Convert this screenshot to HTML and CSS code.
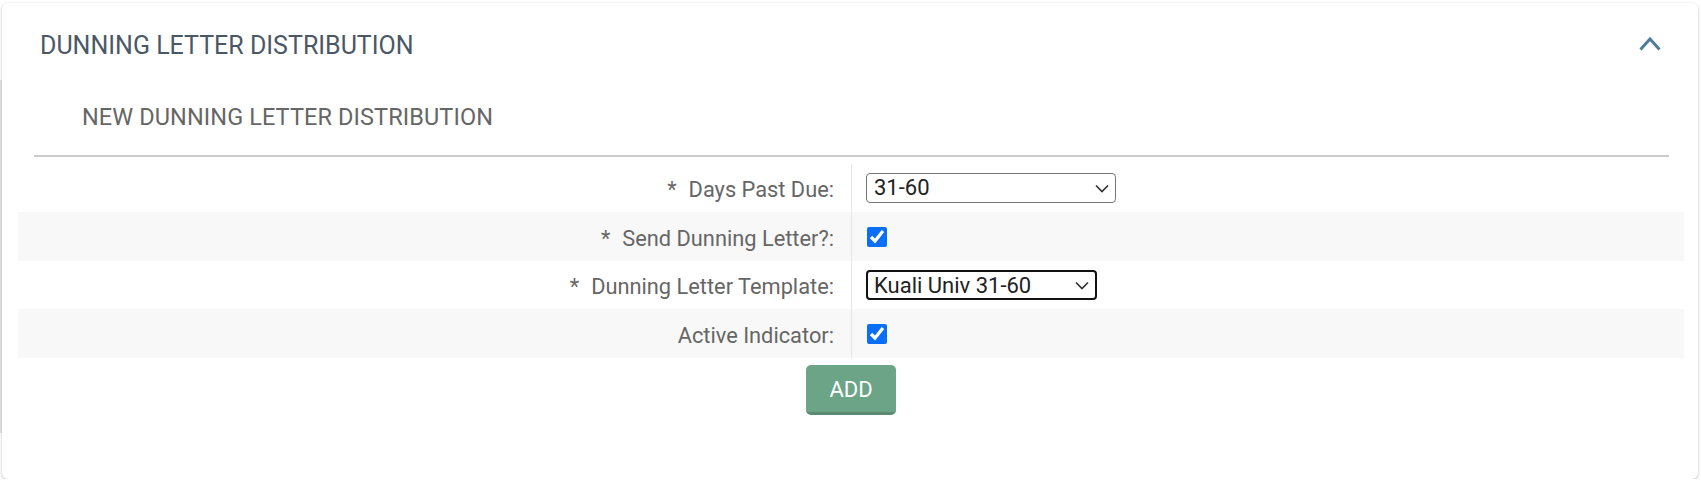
FILE: index.html
```html
<!DOCTYPE html>
<html lang="en">
<head>
<meta charset="utf-8">
<title>Dunning Letter Distribution</title>
<link rel="stylesheet" href="styles.css">
</head>
<body>
<div class="page">
  <div class="strip"></div>
  <section class="card">
    <header class="card-head">
      <h2 class="title">DUNNING LETTER DISTRIBUTION</h2>
      <svg class="chevron" width="22" height="15" viewBox="0 0 22 15" aria-hidden="true">
        <polyline points="1.5,13.5 11,3 20.5,13.5" fill="none" stroke="#4f7c98" stroke-width="3"/>
      </svg>
    </header>
    <h3 class="subtitle">NEW DUNNING LETTER DISTRIBUTION</h3>
    <div class="rule"></div>
    <div class="rows">
      <div class="row">
        <div class="label"><span class="req">*</span>Days Past Due:</div>
        <div class="field">
          <select class="sel sel-wide"><option>31-60</option></select>
        </div>
      </div>
      <div class="row">
        <div class="label"><span class="req">*</span>Send Dunning Letter?:</div>
        <div class="field"><input type="checkbox" class="chk" checked></div>
      </div>
      <div class="row">
        <div class="label"><span class="req">*</span>Dunning Letter Template:</div>
        <div class="field">
          <select class="sel sel-focus"><option>Kuali Univ 31-60</option></select>
        </div>
      </div>
      <div class="row">
        <div class="label">Active Indicator:</div>
        <div class="field"><input type="checkbox" class="chk" checked></div>
      </div>
    </div>
    <div class="actions">
      <button class="btn-add" type="button">ADD</button>
    </div>
  </section>
</div>
</body>
</html>
```
FILE: styles.css
```css
html, body {
  margin: 0;
  padding: 0;
  background: #ffffff;
  font-family: Roboto, "Liberation Sans", Arial, sans-serif;
}

.page {
  display: flex;
  align-items: flex-start;
  padding: 3px 3px 0 0;
}

.strip {
  flex: none;
  width: 2px;
  height: 353px;
  margin-top: 77px;
  background: #e4e8e7;
}

.card {
  flex: 1;
  height: 476px;
  box-sizing: border-box;
  background: #ffffff;
  border-radius: 6px;
  box-shadow: 0 1px 3px rgba(0, 0, 0, 0.28);
}

.card-head {
  display: flex;
  align-items: center;
  justify-content: space-between;
  padding: 28px 37px 0 38px;
}

.title {
  margin: 0;
  font-size: 25px;
  line-height: 30px;
  font-weight: 400;
  color: #4a5866;
  letter-spacing: 0;
}

.chevron {
  display: block;
  margin-top: -6px;
}

.subtitle {
  margin: 41px 0 0 80px;
  font-size: 23.5px;
  line-height: 30px;
  font-weight: 400;
  color: #666666;
  letter-spacing: 0.1px;
}

.rule {
  margin: 23px 29px 0 32px;
  height: 2px;
  background: #cccccc;
}

.rows {
  margin: 7px 14px 0 16px;
}

.row {
  display: grid;
  grid-template-columns: 834px 1fr;
  height: 48px;
}

.row:nth-child(even) {
  height: 49px;
  background: #f8f8f8;
}

.label {
  display: flex;
  align-items: center;
  justify-content: flex-end;
  padding-right: 17px;
  padding-top: 3px;
  box-sizing: border-box;
  font-size: 21.8px;
  color: #666666;
  border-right: 1px solid #e3e7e6;
}

.req {
  margin-right: 12px;
}

.field {
  display: flex;
  align-items: center;
  padding-left: 14px;
}

.sel {
  -webkit-appearance: none;
  appearance: none;
  height: 30px;
  box-sizing: border-box;
  margin: 0;
  padding: 0 28px 0 7px;
  font-family: Roboto, "Liberation Sans", Arial, sans-serif;
  font-size: 22px;
  line-height: 28px;
  color: #222222;
  background-color: #ffffff;
  background-image: url("data:image/svg+xml,%3Csvg xmlns='http://www.w3.org/2000/svg' width='14' height='9' viewBox='0 0 14 9'%3E%3Cpolyline points='1,1.5 7,7.5 13,1.5' fill='none' stroke='%23333' stroke-width='1.7'/%3E%3C/svg%3E");
  background-repeat: no-repeat;
  background-position: right 6px center;
  background-size: 14px 9px;
  border: 1px solid #767676;
  border-radius: 4px;
}

.sel-wide {
  width: 250px;
}

.sel-focus {
  width: 231px;
  border: 2px solid #111111;
  padding-left: 6px;
  background-position: right 6px center;
}

.chk {
  width: 20px;
  height: 20px;
  margin: 0 0 0 1px;
  accent-color: #0b6ef7;
}

.actions {
  display: flex;
  justify-content: center;
  padding: 7px 0 0 2px;
}

.btn-add {
  width: 90px;
  height: 50px;
  box-sizing: border-box;
  border: none;
  border-bottom: 3px solid #5a8b71;
  border-radius: 5px;
  background: #6ba487;
  color: #ffffff;
  font-family: Roboto, "Liberation Sans", Arial, sans-serif;
  font-size: 22px;
  padding: 2px 0 0 0;
  cursor: pointer;
}
```
